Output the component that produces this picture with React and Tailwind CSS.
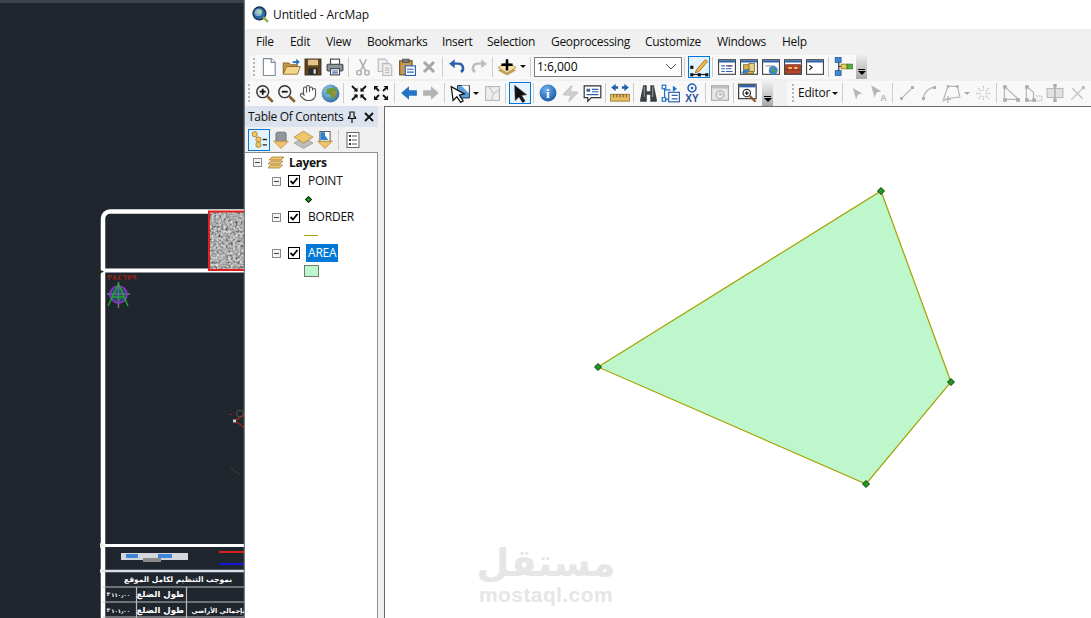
import React from 'react';
import { Hand, Zap } from 'lucide-react';

const uiFont = "font-['Open_Sans',sans-serif]";

// small helpers for the toolbar drawings
const Ico = ({ children, size = 18, box = 16 }) => (
  <svg width={size} height={size} viewBox={`0 0 ${box} ${box}`} className="block">{children}</svg>
);

const Win = ({ children, dim }) => (
  <Ico size={18}>
    <rect x="0.5" y="1.5" width="15" height="13" fill={dim ? '#e8e8e8' : '#fff'} stroke={dim ? '#aaa' : '#444'} />
    <rect x="1" y="2" width="14" height="2" fill={dim ? '#bbb' : '#2c62a8'} />
    {children}
  </Ico>
);

const Magnifier = ({ sign }) => (
  <Ico size={19}>
    <circle cx="6.5" cy="6.5" r="5" fill="#f4f4f4" stroke="#333" strokeWidth="1.2" />
    <path d="M10.5 10.5 L15 15" stroke="#8a5a2b" strokeWidth="2.2" />
    <path d={sign === '+' ? 'M4 6.5h5M6.5 4v5' : 'M4 6.5h5'} stroke="#111" strokeWidth="1.5" />
  </Ico>
);

const icons = {
  newDoc: (
    <Ico>
      <path d="M3 .5h7l3.5 3.5v11.5H3z" fill="#fff" stroke="#7f8a96" />
      <path d="M10 .5V4h3.5" fill="#e6eef6" stroke="#7f8a96" />
    </Ico>
  ),
  open: (
    <Ico size={19}>
      <path d="M1 5h5l1 1.5h6V8H4.5L1 14z" fill="#c89a45" stroke="#7c5a1e" strokeWidth=".7" />
      <path d="M4 8h11.5L13 14.5H1z" fill="#f2d58e" stroke="#8a6420" strokeWidth=".7" />
      <path d="M9 3.5h3V1.5l3 2.7-3 2.6V5H9z" fill="#1f6fc4" />
    </Ico>
  ),
  save: (
    <Ico>
      <rect x="1" y="1" width="14" height="14" fill="#5d431f" stroke="#3b2a12" />
      <rect x="3.5" y="1.5" width="9" height="5" fill="#e6c58a" />
      <rect x="4" y="9" width="8" height="6" fill="#2b2b2b" />
      <rect x="8.5" y="10" width="2" height="4" fill="#ddd" />
    </Ico>
  ),
  print: (
    <Ico>
      <rect x="4" y="1" width="8" height="5" fill="#fff" stroke="#444" />
      <rect x="1" y="5.5" width="14" height="6" rx="1" fill="#8d949c" stroke="#444" />
      <rect x="4" y="9.5" width="8" height="5.5" fill="#fff" stroke="#444" />
      <path d="M5.5 11.5h5M5.5 13.2h5" stroke="#2c62a8" />
    </Ico>
  ),
  cut: (
    <Ico>
      <path d="M5 1l5 10M11 1L6 11" stroke="#adadad" strokeWidth="1.3" />
      <circle cx="4.5" cy="13" r="2" fill="none" stroke="#adadad" strokeWidth="1.3" />
      <circle cx="11.5" cy="13" r="2" fill="none" stroke="#adadad" strokeWidth="1.3" />
    </Ico>
  ),
  copy: (
    <Ico>
      <path d="M2 1h6l2 2v9H2z" fill="#eee" stroke="#b8b8b8" />
      <path d="M6 5h6l2 2v8.5H6z" fill="#eee" stroke="#b8b8b8" />
      <path d="M8 9h4M8 11h4M8 13h4" stroke="#c4c4c4" />
    </Ico>
  ),
  paste: (
    <Ico>
      <rect x="1.5" y="2.5" width="11" height="12.5" fill="#c99b52" stroke="#6c4f20" />
      <rect x="4" y="1" width="6" height="3" fill="#777" stroke="#444" strokeWidth=".6" />
      <rect x="6.5" y="7" width="9" height="8.5" fill="#fff" stroke="#2c62a8" />
      <path d="M8 10h6M8 12.5h6" stroke="#2c62a8" />
    </Ico>
  ),
  del: (
    <Ico size={16}>
      <path d="M3 3l10 10M13 3L3 13" stroke="#a6a6a6" strokeWidth="3" />
    </Ico>
  ),
  undo: (
    <Ico>
      <path d="M4 5h5.5a4 4 0 0 1 2 7.4" fill="none" stroke="#2a62ad" strokeWidth="2.2" />
      <path d="M6 1L1 5l5 4z" fill="#2a62ad" />
    </Ico>
  ),
  redo: (
    <Ico>
      <path d="M12 5H6.5a4 4 0 0 0-2 7.4" fill="none" stroke="#bdbdbd" strokeWidth="2.2" />
      <path d="M10 1l5 4-5 4z" fill="#bdbdbd" />
    </Ico>
  ),
  add: (
    <Ico size={18}>
      <path d="M8 6l8 5-8 4.5L0 11z" fill="#c6a35e" />
      <path d="M8 3.5l8 5-8 5-8-5z" fill="#f6dfa6" stroke="#a57f35" strokeWidth=".6" />
      <path d="M8 1v10M3 6h10" stroke="#000" strokeWidth="2.2" />
    </Ico>
  ),
  editTool: (
    <Ico size={20}>
      <path d="M2 14h12" stroke="#222" />
      <rect x="1" y="13" width="2.5" height="2.5" fill="#111" />
      <rect x="7" y="13" width="2.5" height="2.5" fill="#111" />
      <rect x="13" y="13" width="2.5" height="2.5" fill="#111" />
      <rect x="1" y="7" width="2.5" height="2.5" fill="#111" />
      <path d="M6 10l7-8 2 1.6-7 8-3 1z" fill="#f0b545" stroke="#8a6420" strokeWidth=".6" />
    </Ico>
  ),
  tableWin: (
    <Win>
      <path d="M3 7h3M7 7h6M3 9.5h3M7 9.5h5M3 12h3M7 12h6" stroke="#2c62a8" />
      <path d="M9 7h3" stroke="#c33" />
    </Win>
  ),
  catalogWin: (
    <Win>
      <rect x="3" y="6" width="9" height="8" fill="#d9b342" stroke="#6c4f20" strokeWidth=".6" />
      <rect x="8" y="5" width="5" height="7" fill="#e8cf7a" stroke="#6c4f20" strokeWidth=".6" />
      <path d="M1 13l3-3h5l-3 4z" fill="#3b7fc4" />
    </Win>
  ),
  searchWin: (
    <Win>
      <path d="M3 7h8" stroke="#999" />
      <circle cx="10" cy="11" r="4" fill="#3f86c9" />
      <path d="M8 10l2-1 2 2-2 2z" fill="#5aa33c" />
    </Win>
  ),
  toolboxWin: (
    <Win>
      <rect x="1.5" y="6" width="13" height="8" fill="#b8432c" stroke="#5d1f12" strokeWidth=".6" />
      <rect x="4" y="8" width="3" height="2" fill="#e8c85a" />
      <rect x="9" y="8" width="3" height="2" fill="#e8c85a" />
      <path d="M1.5 10.5h13" stroke="#5d1f12" strokeWidth=".6" />
    </Win>
  ),
  pythonWin: (
    <Win>
      <path d="M3 6.5l2.5 2-2.5 2" fill="none" stroke="#222" />
    </Win>
  ),
  model: (
    <Ico size={19}>
      <path d="M4 3v10M4 8h6" stroke="#333" />
      <rect x="1" y="0.5" width="5" height="4" fill="#3d86d1" stroke="#1b4f88" strokeWidth=".6" />
      <rect x="1" y="11.5" width="5" height="4" fill="#3d86d1" stroke="#1b4f88" strokeWidth=".6" />
      <rect x="6" y="6" width="5" height="4" fill="#e8cf5a" stroke="#7c6a1e" strokeWidth=".6" />
      <rect x="11" y="6" width="4.5" height="4" fill="#55b044" stroke="#2c6a1e" strokeWidth=".6" />
    </Ico>
  ),
  fixedIn: (
    <Ico size={16}>
      <path d="M1 1l5 5M15 1l-5 5M1 15l5-5M15 15l-5-5" stroke="#111" strokeWidth="1.8" />
      <path d="M2.5 6.5h4v-4zM13.5 6.5h-4v-4zM2.5 9.5h4v4zM13.5 9.5h-4v4z" fill="#111" />
    </Ico>
  ),
  fixedOut: (
    <Ico size={16}>
      <path d="M3 3l3 3M13 3l-3 3M3 13l3-3M13 13l-3-3" stroke="#111" strokeWidth="1.8" />
      <path d="M1 1h4.5L1 5.500zM15 1h-4.500L15 5.500zM1 15h4.500L1 10.500zM15 15h-4.500L15 10.500z" fill="#111" />
    </Ico>
  ),
  back: (
    <Ico>
      <path d="M1 8l7-6v3.500h7v5H8V14z" fill="#2474c6" />
    </Ico>
  ),
  forward: (
    <Ico>
      <path d="M15 8L8 2v3.500H1v5h7V14z" fill="#b4b4b4" />
    </Ico>
  ),
  selectMap: (
    <Ico size={20}>
      <path d="M6 2h9.500v10H6z" fill="#5d9fdc" stroke="#222" strokeWidth=".7" />
      <path d="M9 2l6 6v-6z" fill="#fff" />
      <path d="M1 3l1.500 11 3-3 3 4.500 2-1.300-3-4.500 4-1z" fill="#fff" stroke="#111" />
    </Ico>
  ),
  clearSel: (
    <Ico size={17}>
      <rect x="1.500" y="1.500" width="13" height="13" fill="#eee" stroke="#b5b5b5" />
      <path d="M5 2l4 6-2 6.500M9 8l5-3" fill="none" stroke="#c4c4c4" />
    </Ico>
  ),
  arrow: (
    <Ico size={19}>
      <path d="M3 1l.5 13 3.200-3 3 4.800 2.300-1.400-3-4.700 4.200-.7z" fill="#111" stroke="#555" strokeWidth=".4" />
    </Ico>
  ),
  info: (
    <Ico size={18}>
      <defs>
        <radialGradient id="infoG" cx=".4" cy=".3" r=".8">
          <stop offset="0" stopColor="#6fb1ec" />
          <stop offset="1" stopColor="#0f4fa0" />
        </radialGradient>
      </defs>
      <circle cx="8" cy="8" r="7.500" fill="url(#infoG)" />
      <text x="8" y="12.500" textAnchor="middle" fontSize="12" fontWeight="700" fill="#fff" fontFamily="Liberation Serif">i</text>
    </Ico>
  ),
  popup: (
    <Ico size={19}>
      <path d="M1 1.500h14v10H7l-3 3v-3H1z" fill="#fff" stroke="#333" />
      <rect x="3" y="4" width="3" height="2.500" fill="#2c62a8" />
      <path d="M7.500 4.500h5.500M7.500 6.500h5.500M3 9h10" stroke="#2c62a8" />
    </Ico>
  ),
  measure: (
    <Ico size={20}>
      <path d="M1 3.500l3.500-3v2h2v2h-2v2zM15 3.500l-3.500-3v2h-2v2h2v2z" fill="#1f5fae" />
      <rect x="0.500" y="9" width="15" height="5.500" fill="#e5bf5e" stroke="#8a6420" strokeWidth=".6" />
      <path d="M3 9v2.500M5.500 9v2.500M8 9v2.500M10.500 9v2.500M13 9v2.500" stroke="#5d431f" strokeWidth=".7" />
    </Ico>
  ),
  binoculars: (
    <Ico size={19}>
      <path d="M3.500 1h3v5h3V1h3l2.500 12v2H9.500V9h-3v6H1v-2z" fill="#3c3f44" />
      <path d="M4.500 2v9M11.500 2v9" stroke="#8a9098" />
    </Ico>
  ),
  route: (
    <Ico size={19}>
      <rect x="6.500" y="7" width="9" height="8" fill="#fff" stroke="#2c62a8" />
      <path d="M9 9.500h5M9 12.500h5" stroke="#2c62a8" />
      <path d="M3 3v10h3M3 5h5" fill="none" stroke="#1f6fc4" />
      <rect x="1" y="1" width="3" height="3" fill="#fff" stroke="#1f6fc4" />
      <rect x="1" y="11.500" width="3" height="3" fill="#fff" stroke="#1f6fc4" />
      <path d="M10 1.500l3.500 2.500L10 6.500z" fill="#1f6fc4" />
    </Ico>
  ),
  xy: (
    <Ico size={20}>
      <circle cx="8" cy="4" r="3.200" fill="none" stroke="#1f5fae" strokeWidth="1.200" />
      <circle cx="8" cy="4" r="1" fill="#1f5fae" />
      <text x="8" y="15.500" textAnchor="middle" fontSize="8" fontWeight="700" fill="#1f4f96" fontFamily="Liberation Sans">XY</text>
    </Ico>
  ),
  clockWin: (
    <Win dim>
      <circle cx="8" cy="9.500" r="3.500" fill="none" stroke="#aaa" />
      <path d="M8 7.500v2h2" fill="none" stroke="#aaa" />
    </Win>
  ),
  magWin: (
    <Ico size={20}>
      <rect x="0.500" y="1" width="14" height="11.500" fill="#fff" stroke="#444" />
      <rect x="1" y="1.500" width="13" height="2" fill="#2c62a8" />
      <circle cx="7" cy="8" r="3" fill="#fff" stroke="#333" />
      <path d="M5.500 8h3M7 6.500v3" stroke="#111" />
      <path d="M9.500 10.500l4.500 4.500" stroke="#8a5a2b" strokeWidth="1.800" />
    </Ico>
  ),
  // greyed editor tools
  edArrow: (
    <Ico size={15}>
      <path d="M3 2l10 6-4.500 1-2 5z" fill="#b5b5b5" />
    </Ico>
  ),
  edArrowA: (
    <Ico size={18}>
      <path d="M1 1l9 5.500-4 1-2 4.500z" fill="#b5b5b5" />
      <text x="12" y="15" textAnchor="middle" fontSize="8" fontWeight="700" fill="#b5b5b5" fontFamily="Liberation Sans">A</text>
    </Ico>
  ),
  edLine: (
    <Ico size={16}>
      <path d="M2 14L14 2" stroke="#bbb" strokeWidth="1.300" />
      <rect x="1" y="12" width="3" height="3" fill="#b0b0b0" />
      <rect x="12" y="1" width="3" height="3" fill="#b0b0b0" />
    </Ico>
  ),
  edCurve: (
    <Ico size={16}>
      <path d="M2 14C3 7 8 3 14 2" fill="none" stroke="#bbb" strokeWidth="1.300" />
      <rect x="1" y="12" width="3" height="3" fill="#b0b0b0" />
      <rect x="12" y="1" width="3" height="3" fill="#b0b0b0" />
    </Ico>
  ),
  edPoly: (
    <Ico size={19}>
      <path d="M5 2h8l2 9-9 1-5 2z" fill="none" stroke="#b5b5b5" />
      <path d="M5 10v6M2.500 13h5" stroke="#b5b5b5" />
      <rect x="4" y="1" width="2" height="2" fill="#aaa" />
      <rect x="12" y="1" width="2" height="2" fill="#aaa" />
    </Ico>
  ),
  edBurst: (
    <Ico size={17}>
      <path d="M8 1v5M8 10v5M1 8h5M10 8h5M3 3l3 3M13 3l-3 3M3 13l3-3M13 13l-3-3" stroke="#c4c4c4" strokeWidth="1.200" strokeDasharray="1.500 1" />
    </Ico>
  ),
  edTri: (
    <Ico size={19}>
      <path d="M2 2l12 11H2z" fill="none" stroke="#b5b5b5" />
      <rect x="1" y="1" width="3" height="3" fill="#aaa" />
      <rect x="1" y="12" width="3" height="3" fill="#aaa" />
      <rect x="12" y="12" width="3" height="3" fill="#aaa" />
    </Ico>
  ),
  edSplit: (
    <Ico size={19}>
      <path d="M2 2l6 5v7H2z" fill="none" stroke="#b5b5b5" />
      <path d="M10 10h5v4h-5" fill="none" stroke="#c0c0c0" strokeDasharray="1.500 1" />
      <rect x="1" y="1" width="3" height="3" fill="#aaa" />
      <rect x="1" y="12" width="3" height="3" fill="#aaa" />
      <rect x="7" y="12" width="3" height="3" fill="#aaa" />
    </Ico>
  ),
  edCross: (
    <Ico size={18}>
      <rect x="1" y="4" width="14" height="8" fill="#e2e2e2" stroke="#bbb" />
      <path d="M8 1v14" stroke="#aaa" strokeWidth="1.200" />
      <rect x="6.500" y="0" width="3" height="3" fill="#aaa" />
      <rect x="6.500" y="13" width="3" height="3" fill="#aaa" />
    </Ico>
  ),
  edX: (
    <Ico size={17}>
      <path d="M2 14L14 2M3 3l10 10" stroke="#c0c0c0" strokeWidth="1.200" />
      <rect x="12" y="1" width="3" height="3" fill="#bbb" />
    </Ico>
  ),
};

const Btn = ({ icon, selected }) => (
  <div
    className={`flex h-[22px] w-[22px] shrink-0 items-center justify-center ${
      selected ? 'border border-[#0078d7] bg-[#e5f3ff]' : ''
    }`}
  >
    {icons[icon] || icon}
  </div>
);

const Sep = () => (
  <div className="flex h-[20px] w-[6px] shrink-0 justify-start pl-[2px]">
    <div className="h-full w-px bg-[#cdcdcd]" />
  </div>
);

const Caret = ({ dim }) => (
  <div className="flex w-[10px] shrink-0 items-center justify-center">
    <div className={`h-0 w-0 border-x-[3px] border-t-[3px] border-x-transparent ${dim ? 'border-t-[#aaa]' : 'border-t-[#111]'}`} />
  </div>
);

const Grip = () => (
  <div className="flex h-[18px] w-[7px] shrink-0 flex-col justify-between pl-[2px]">
    {[0, 1, 2, 3, 4].map((i) => (
      <div key={i} className="h-[2px] w-[2px] bg-[#b4b4b4]" />
    ))}
  </div>
);

const Overflow = () => (
  <div className="flex h-[25px] w-[11px] shrink-0 flex-col items-center justify-end bg-gradient-to-b from-[#f0f0f0] to-[#a9a9a9] pb-[4px]">
    <div className="mb-[1px] h-px w-[7px] bg-black" />
    <div className="h-0 w-0 border-x-[4px] border-t-[4px] border-x-transparent border-t-black" />
  </div>
);

const menu = [
  ['File', 'w-[34px]'],
  ['Edit', 'w-[36px]'],
  ['View', 'w-[41px]'],
  ['Bookmarks', 'w-[75px]'],
  ['Insert', 'w-[45px]'],
  ['Selection', 'w-[64px]'],
  ['Geoprocessing', 'w-[94px]'],
  ['Customize', 'w-[72px]'],
  ['Windows', 'w-[65px]'],
  ['Help', 'w-[40px]'],
];

const ExpandBox = () => (
  <div className="flex h-[9px] w-[9px] shrink-0 items-center justify-center border border-[#8a8a8a] bg-[#f4f4f4]">
    <div className="h-px w-[5px] bg-[#444]" />
  </div>
);

const Check = () => (
  <div className="flex h-[12px] w-[12px] shrink-0 items-center justify-center border border-black bg-white">
    <svg width="10" height="10" viewBox="0 0 10 10">
      <path d="M1.500 5l2.500 2.500L8.500 2" fill="none" stroke="#000" strokeWidth="1.800" />
    </svg>
  </div>
);

const LayerRow = ({ name, active }) => (
  <div className="flex h-[18px] items-center pl-[27px]">
    <ExpandBox />
    <div className="w-[7px]" />
    <Check />
    <div className={`ml-[6px] flex h-[18px] items-center px-[2px] text-[12px] tracking-[-0.2px] ${active ? 'bg-[#0078d7] text-white' : 'text-[#111]'}`}>
      {name}
    </div>
  </div>
);

const SymbolRow = ({ children }) => (
  <div className="flex h-[18px] items-center pl-[59px]">{children}</div>
);

// the AutoCAD window behind ArcMap
const CadDrawing = () => (
  <svg width="245" height="618" viewBox="0 0 245 618" className="block">
    <defs>
      <filter id="noise" x="0" y="0" width="100%" height="100%">
        <feTurbulence type="fractalNoise" baseFrequency="0.42" numOctaves="3" seed="4" />
        <feColorMatrix type="matrix" values="1.100 0 0 0 -0.130  1.100 0 0 0 -0.130  1.100 0 0 0 -0.130  0 0 0 0 1" />
      </filter>
    </defs>

    <rect x="0" y="0" width="245" height="3" fill="#3a424c" />

    <path d="M245 211.500H110a7 7 0 0 0-7 7V618" fill="none" stroke="#fff" strokeWidth="4.500" />
    <path d="M103 270.500H245" stroke="#fff" strokeWidth="4" />
    <rect x="209" y="212" width="36" height="58" filter="url(#noise)" />
    <path d="M245 211.500H209V270H245" fill="none" stroke="#e0201c" strokeWidth="2" />
    <path d="M100 270l4 1.500-4 2z" fill="#222" />

    <text x="107" y="279.500" fontSize="8" fontWeight="700" fill="#8c2416" fontFamily="DejaVu Sans">٣٨٤٦٧٩</text>
    <path d="M107 294h23M118.500 282v26" stroke="#777" strokeWidth="1.500" />
    <circle cx="118.500" cy="294.500" r="8.500" fill="#3a6ea8" fillOpacity=".5" stroke="#9b30d0" strokeWidth="1.500" />
    <path d="M108 306L118.500 284L128 306M113 297h11" fill="none" stroke="#1fa82a" strokeWidth="1.500" />

    <circle cx="240" cy="413.500" r="3.500" fill="none" stroke="#555" strokeWidth="1" />
    <circle cx="230.500" cy="414.500" r=".8" fill="#e0201c" />
    <path d="M245 414L235 421L245 428" fill="none" stroke="#e0201c" strokeWidth="1" />
    <rect x="233" y="419.500" width="3" height="3" fill="#ccc" />
    <path d="M231 468l3 3 4 2 3 2" fill="none" stroke="#2f7a3c" strokeWidth=".8" strokeDasharray="1 1" />

    <path d="M103 545.500H245" stroke="#fff" strokeWidth="3" />
    <path d="M103 571H245" stroke="#d8dde6" strokeWidth="2.500" />
    <path d="M100 543l5 2.500-5 2.500zM100 569l5 2-5 2z" fill="#e8e8e8" />
    <rect x="121" y="553" width="67" height="7" fill="#d4d8de" />
    <rect x="126" y="554" width="12" height="4" fill="#3f86d6" />
    <rect x="158" y="554" width="14" height="4" fill="#3f86d6" />
    <rect x="143" y="558" width="18" height="4" fill="#8a8a8a" />
    <path d="M219 552H245" stroke="#d8201c" strokeWidth="2" />
    <path d="M219 564H245" stroke="#1515d8" strokeWidth="2" />

    <path d="M103 587H245M103 602H245M103 617H245" stroke="#bbb" strokeWidth="1.200" />
    <path d="M136.500 587V618M186.500 587V618" stroke="#bbb" strokeWidth="1.200" />

    <g fontFamily="DejaVu Sans" fontWeight="700" fill="#fff" direction="rtl">
      <text x="232" y="582" fontSize="7.500">بموجب التنظيم لكامل الموقع</text>
      <text x="184" y="597" fontSize="8.500">طول الضلع</text>
      <text x="184" y="613" fontSize="8.500">طول الضلع</text>
      <text x="245" y="613" fontSize="6.500">بإجمالي الأراضي</text>
      <text x="130" y="597" fontSize="5.500">١١٠٫٠٠</text>
      <text x="130" y="613" fontSize="5.500">١٠١٫٠٠</text>
      <text x="110" y="596" fontSize="5.500">٣</text>
      <text x="110" y="612" fontSize="5.500">٣</text>
    </g>

    <path d="M244.500 0V618" stroke="#767b82" strokeWidth="1.500" />
  </svg>
);

const MapView = () => {
  const pts = [[598, 367], [881, 191], [951, 382], [866, 484]];
  return (
    <svg viewBox="385 107 706 511" width="706" height="511" className="block">
      <polygon points={pts.map((p) => p.join(',')).join(' ')} fill="#bdf7cb" stroke="#a3a300" strokeWidth="1.200" />
      {pts.map(([x, y]) => (
        <path key={x} d={`M${x} ${y - 3.500}L${x + 3.500} ${y}L${x} ${y + 3.500}L${x - 3.500} ${y}Z`} fill="#1e9a1e" stroke="#0b2a0b" strokeWidth=".9" />
      ))}
    </svg>
  );
};

export default function App() {
  return (
    <div className={`relative flex h-[618px] w-[1091px] overflow-hidden bg-[#20262e] ${uiFont}`}>
      {/* background CAD app */}
      <div className="h-full w-[245px] shrink-0 bg-[#20262e]">
        <CadDrawing />
      </div>

      {/* ArcMap window */}
      <div className="flex h-full min-w-0 flex-1 flex-col bg-[#f0f0f0]">
        {/* title bar */}
        <div className="flex h-[29px] shrink-0 items-center bg-white pl-[7px] text-[12px] tracking-[-0.12px] text-[#111]">
          <svg width="17" height="17" viewBox="0 0 16 16" className="block">
            <circle cx="7" cy="7" r="6" fill="#2d6aa6" stroke="#1a3550" strokeWidth="1.300" />
            <path d="M4 5l3-2 3 2-2 3-3-1z" fill="#7fbf5a" />
            <circle cx="6" cy="6" r="3.500" fill="#bcdcf0" fillOpacity=".6" />
            <path d="M10.500 10.500L15 15" stroke="#8fae3a" strokeWidth="2.200" />
          </svg>
          <span className="ml-[4px]">Untitled - ArcMap</span>
        </div>

        {/* menu bar */}
        <div className="flex h-[25px] shrink-0 items-center pl-[11px] pt-[1px] text-[12px] tracking-[-0.3px] text-[#111]">
          {menu.map(([label, w]) => (
            <div key={label} className={`${w} shrink-0`}>{label}</div>
          ))}
        </div>

        {/* standard toolbar */}
        <div className="flex h-[25px] shrink-0 items-center pl-[5px]">
          <div className="flex h-[24px] items-center rounded-sm bg-[#f8f8f8] pl-[1px]">
            <Grip />
            <Btn icon="newDoc" />
            <Btn icon="open" />
            <Btn icon="save" />
            <Btn icon="print" />
            <Sep />
            <Btn icon="cut" />
            <Btn icon="copy" />
            <Btn icon="paste" />
            <Btn icon="del" />
            <Sep />
            <Btn icon="undo" />
            <Btn icon="redo" />
            <Sep />
            <Btn icon="add" />
            <Caret />
            <Sep />
            <div className="flex h-[20px] w-[148px] shrink-0 items-center justify-between border border-[#7a7a7a] bg-white pl-[2px] pr-[4px] text-[12px] text-black">
              <span>1:6,000</span>
              <svg width="12" height="7" viewBox="0 0 12 7">
                <path d="M1 1l5 5 5-5" fill="none" stroke="#555" />
              </svg>
            </div>
            <Sep />
            <Btn icon="editTool" selected />
            <Sep />
            <Btn icon="tableWin" />
            <Btn icon="catalogWin" />
            <Btn icon="searchWin" />
            <Btn icon="toolboxWin" />
            <Btn icon="pythonWin" />
            <Sep />
            <Btn icon="model" />
            <div className="w-[2px]" />
            <Overflow />
          </div>
        </div>

        {/* tools + editor toolbars */}
        <div className="mt-[1px] flex h-[26px] shrink-0 items-center pl-[1px]">
          <div className="flex h-[25px] items-center rounded-sm bg-[#f8f8f8]">
            <Grip />
            <Btn icon={<Magnifier sign="+" />} />
            <Btn icon={<Magnifier sign="-" />} />
            <Btn icon={<Hand size={18} strokeWidth={1.500} fill="#fff" color="#555" />} />
            <Btn
              icon={
                <Ico size={19}>
                  <defs>
                    <radialGradient id="globeG" cx=".4" cy=".35" r=".8">
                      <stop offset="0" stopColor="#9cd0ee" />
                      <stop offset="1" stopColor="#1c5c96" />
                    </radialGradient>
                  </defs>
                  <circle cx="8" cy="8" r="7.500" fill="url(#globeG)" />
                  <path d="M5 4l6-1 3 3-2 5-3 2-1-4-4-1z" fill="#6e9c3c" />
                  <path d="M10 6l3 1-2 3z" fill="#c8873a" />
                </Ico>
              }
            />
            <Sep />
            <div className="w-[1px]" />
            <Btn icon="fixedIn" />
            <Btn icon="fixedOut" />
            <Sep />
            <Btn icon="back" />
            <Btn icon="forward" />
            <Sep />
            <div className="w-[1px]" />
            <Btn icon="selectMap" />
            <Caret />
            <Btn icon="clearSel" />
            <Sep />
            <Btn icon="arrow" selected />
            <Sep />
            <Btn icon="info" />
            <Btn icon={<Zap size={19} strokeWidth={1} fill="#cfcfcf" color="#bbb" />} />
            <Btn icon="popup" />
            <Sep />
            <Btn icon="measure" />
            <Sep />
            <Btn icon="binoculars" />
            <Btn icon="route" />
            <Btn icon="xy" />
            <Sep />
            <Btn icon="clockWin" />
            <Sep />
            <Btn icon="magWin" />
            <div className="w-[3px]" />
            <Overflow />
          </div>
          <div className="ml-[14px] flex h-[25px] flex-1 items-center rounded-l-sm bg-[#f8f8f8] pl-[3px]">
            <Grip />
            <div className="w-[1px]" />
            <span className="text-[12px] tracking-[-0.2px] text-[#111]">Editor</span>
            <Caret />
            <Sep />
            <Btn icon="edArrow" />
            <Btn icon="edArrowA" />
            <Sep />
            <Btn icon="edLine" />
            <Btn icon="edCurve" />
            <Btn icon="edPoly" />
            <Caret dim />
            <Btn icon="edBurst" />
            <Sep />
            <Btn icon="edTri" />
            <Btn icon="edSplit" />
            <Btn icon="edCross" />
            <Btn icon="edX" />
          </div>
        </div>

        {/* table of contents + map */}
        <div className="flex min-h-0 flex-1">
          <div className="flex h-full w-[133px] shrink-0 flex-col">
            <div className="flex h-[21px] shrink-0 items-center justify-between bg-[#dbe3ee] pl-[3px] pr-[4px] text-[12px] tracking-[-0.3px] text-[#111]">
              <span className="whitespace-nowrap">Table Of Contents</span>
              <div className="flex items-center gap-[7px]">
                <svg width="10" height="12" viewBox="0 0 10 12">
                  <path d="M3 1h4v5h1.500v1.500h-7V6H3zM5 7.500V12" fill="none" stroke="#111" strokeWidth="1.200" />
                </svg>
                <svg width="10" height="10" viewBox="0 0 10 10">
                  <path d="M1 1l8 8M9 1L1 9" stroke="#111" strokeWidth="1.800" />
                </svg>
              </div>
            </div>
            <div className="flex h-[25px] shrink-0 items-center pl-[3px]">
              <Btn
                selected
                icon={
                  <Ico size={17}>
                    <circle cx="3.500" cy="3" r="2.500" fill="#eec76a" stroke="#8a6420" strokeWidth=".6" />
                    <circle cx="7" cy="8" r="2.500" fill="#eec76a" stroke="#8a6420" strokeWidth=".6" />
                    <circle cx="7" cy="13" r="2.500" fill="#eec76a" stroke="#8a6420" strokeWidth=".6" />
                    <path d="M11 8h4M11 13h4" stroke="#222" strokeWidth="1.200" />
                  </Ico>
                }
              />
              <Btn
                icon={
                  <Ico size={18}>
                    <rect x="3.500" y="1" width="9" height="9" rx="1.500" fill="#8f979f" stroke="#555" strokeWidth=".6" />
                    <path d="M1.500 9h13L8 15.500z" fill="#efc56c" stroke="#a57f35" strokeWidth=".6" />
                  </Ico>
                }
              />
              <Btn
                icon={
                  <Ico size={19}>
                    <path d="M8 6l8 5-8 4.500L0 11z" fill="#bdbdbd" stroke="#888" strokeWidth=".5" />
                    <path d="M8 1l8 5-8 5-8-5z" fill="#efc56c" stroke="#a57f35" strokeWidth=".6" />
                  </Ico>
                }
              />
              <Btn
                icon={
                  <Ico size={18}>
                    <rect x="3.500" y="0.500" width="9" height="9" fill="#fff" stroke="#333" strokeWidth=".7" />
                    <path d="M4 1h4v3l3 4H4z" fill="#2f7fd1" />
                    <path d="M1.500 9h13L8 15.500z" fill="#efc56c" stroke="#a57f35" strokeWidth=".6" />
                  </Ico>
                }
              />
              <Sep />
              <Btn
                icon={
                  <Ico size={16}>
                    <rect x="2" y="0.500" width="12" height="15" fill="#fff" stroke="#666" />
                    <path d="M7 4h5M7 8h5M7 12h5" stroke="#555" />
                    <rect x="4" y="3" width="2" height="2" fill="#333" />
                    <rect x="4" y="7" width="2" height="2" fill="#333" />
                    <rect x="4" y="11" width="2" height="2" fill="#333" />
                  </Ico>
                }
              />
            </div>
            <div className="min-h-0 flex-1 border-t border-r border-[#8f8f8f] bg-white">
              <div className="flex h-[19px] items-center pl-[8px]">
                <ExpandBox />
                <div className="w-[6px]" />
                <svg width="17" height="14" viewBox="0 0 17 14" className="block">
                  <path d="M4 1h12l-3 3H1z" fill="#f0c76e" stroke="#9a7420" strokeWidth=".7" />
                  <path d="M3 5h12l-3 3H0z" fill="#f0c76e" stroke="#9a7420" strokeWidth=".7" />
                  <path d="M2.500 9h12l-3 3H0z" fill="#f0c76e" stroke="#9a7420" strokeWidth=".7" />
                </svg>
                <span className="ml-[4px] text-[12px] font-bold tracking-[-0.3px] text-[#111]">Layers</span>
              </div>
              <LayerRow name="POINT" />
              <SymbolRow>
                <div className="ml-[2px] h-[5px] w-[5px] rotate-45 border border-[#0b2a0b] bg-[#1e9a1e]" />
              </SymbolRow>
              <LayerRow name="BORDER" />
              <SymbolRow>
                <div className="h-px w-[14px] bg-[#a3a300]" />
              </SymbolRow>
              <LayerRow name="AREA" active />
              <SymbolRow>
                <div className="h-[12px] w-[15px] border border-[#6f7a70] bg-[#bdf7cb]" />
              </SymbolRow>
            </div>
          </div>
          <div className="w-[6px] shrink-0" />
          <div className="min-w-0 flex-1 border-l border-t border-[#696969] bg-white">
            <MapView />
          </div>
        </div>
      </div>

      {/* mostaql watermark */}
      <div className="absolute left-[478px] top-[540px] flex w-[136px] flex-col items-center text-[#e6e6e6]">
        <span className="text-[38px] leading-[46px] font-bold font-['DejaVu_Sans',sans-serif]" dir="rtl">مستقل</span>
        <span className="text-[21px] leading-[18px] font-bold tracking-[0.4px] font-['Liberation_Sans',sans-serif]">mostaql.com</span>
      </div>
    </div>
  );
}
